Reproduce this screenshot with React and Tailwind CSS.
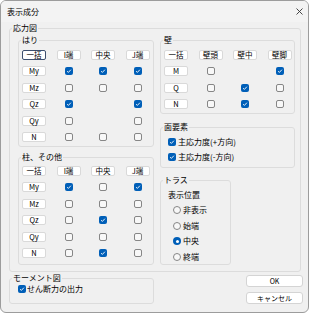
import React from 'react';

// checkbox state per row: 1 = checked, 0 = empty, null = no box
const HARI = [
  ['My', [1, 1, 1]],
  ['Mz', [0, 0, 0]],
  ['Qz', [1, null, 1]],
  ['Qy', [0, null, 0]],
  ['N', [0, 0, 0]],
];
const HASHIRA = [
  ['My', [1, 0, 1]],
  ['Mz', [0, 0, 0]],
  ['Qz', [0, 1, 0]],
  ['Qy', [0, 0, 0]],
  ['N', [0, 1, 0]],
];
const KABE = [
  ['M', [0, null, 1]],
  ['Q', [0, 1, 0]],
  ['N', [0, 1, 0]],
];

const Check = ({ on }) =>
  on ? (
    <span className="w-[8px] h-[8px] rounded-[2px] bg-[#005fb8] flex items-center justify-center shrink-0">
      <svg width="6" height="6" viewBox="0 0 6 6">
        <path d="M1.1 3.2 2.4 4.4 4.9 1.7" fill="none" stroke="#fff" strokeWidth="0.9" />
      </svg>
    </span>
  ) : (
    <span className="w-[8px] h-[8px] rounded-[2px] border border-[#868686] bg-[#f8f8f8] shrink-0" />
  );

const Radio = ({ on }) =>
  on ? (
    <span className="w-[8px] h-[8px] rounded-full bg-[#005fb8] flex items-center justify-center shrink-0">
      <span className="w-[3px] h-[3px] rounded-full bg-white" />
    </span>
  ) : (
    <span className="w-[8px] h-[8px] rounded-full border border-[#868686] bg-[#f8f8f8] shrink-0" />
  );

const BTN_FOCUS =
  'w-[24px] h-[10px] bg-white border border-[#3d4f6e] rounded-[2px] flex items-center justify-center text-[7.5px] leading-none text-black';
const BTN =
  'w-[24px] h-[10px] bg-white border border-[#d9d9d9] rounded-[2px] flex items-center justify-center text-[7.5px] leading-none text-black';

const Btn = ({ children, focus }) => <span className={focus ? BTN_FOCUS : BTN}>{children}</span>;

const Group = ({ label, className = '', children }) => (
  <fieldset className={`border border-[#dcdcdc] rounded-[3px] ${className}`}>
    <legend className="ml-[2px] px-[1px] text-[8px] leading-[10px] text-black">{label}</legend>
    {children}
  </fieldset>
);

const Row = ({ tall, children }) => (
  <div
    className={
      tall
        ? 'grid grid-cols-[24px_24px_24px_24px] gap-x-[10.5px] h-[17px] items-center justify-items-center'
        : 'grid grid-cols-[24px_24px_24px_24px] gap-x-[10.5px] h-[16px] items-center justify-items-center'
    }
  >
    {children}
  </div>
);

const Matrix = ({ heads, rows, focusFirst }) => (
  <div className="pl-[3px]">
    <Row tall>
      {heads.map((h, i) => (
        <Btn key={h} focus={focusFirst && i === 0}>{h}</Btn>
      ))}
    </Row>
    {rows.map(([name, cells], r) => (
      <Row key={name} tall={r % 2 === 1}>
        <Btn>{name}</Btn>
        {cells.map((c, i) => (c === null ? <span key={i} /> : <Check key={i} on={c} />))}
      </Row>
    ))}
  </div>
);

export default function App() {
  return (
    <div className="w-[309px] h-[314px] bg-white font-['Noto_Sans_CJK_JP',sans-serif] text-black">
      <div className="w-[309px] h-[313px] border border-[#9c9c9c] rounded-[6px] bg-[#f0f0f0] overflow-hidden flex flex-col">
        {/* title bar */}
        <div className="h-[21px] flex items-center justify-between pl-[6px] pr-[5px] bg-[#f3f3f3]">
          <span className="text-[8px] leading-none">表示成分</span>
          <svg width="7" height="7" viewBox="0 0 7 7">
            <path d="M0.5 0.5 6.5 6.5M6.5 0.5 0.5 6.5" stroke="#333" strokeWidth="0.9" />
          </svg>
        </div>

        <div className="flex flex-col pl-[8px] pt-[1px]">
          <Group label="応力図" className="w-[292px]">
            <div className="flex gap-[6px] pl-[8px] pt-[2px] pb-[6px]">
              {/* left column */}
              <div className="flex flex-col w-[136px]">
                <Group label="はり">
                  <div className="pt-[1px] pb-[1px]">
                    <Matrix heads={['一括', 'I端', '中央', 'J端']} rows={HARI} focusFirst />
                  </div>
                </Group>
                <Group label="柱、その他" className="mt-[5px]">
                  <div className="pb-[3px]">
                    <Matrix heads={['一括', 'I端', '中央', 'J端']} rows={HASHIRA} />
                  </div>
                </Group>
              </div>

              {/* right column */}
              <div className="flex flex-col w-[135px]">
                <Group label="壁">
                  <div className="pt-[1px] pb-[1px]">
                    <Matrix heads={['一括', '壁頭', '壁中', '壁脚']} rows={KABE} />
                  </div>
                </Group>
                <Group label="面要素" className="mt-[8px]">
                  <div className="pl-[7px] pt-[2px] pb-[3px] text-[8px]">
                    <div className="h-[15px] flex items-center gap-[2px]">
                      <Check on={1} />
                      <span>主応力度(+方向)</span>
                    </div>
                    <div className="h-[15px] flex items-center gap-[2px]">
                      <Check on={1} />
                      <span>主応力度(-方向)</span>
                    </div>
                  </div>
                </Group>
                <Group label="トラス" className="mt-[7px] w-[71px]">
                  <div className="pt-[3px] text-[8px]">
                    <div className="h-[14px] flex items-center pl-[7px]">表示位置</div>
                    {[['非表示', 0, true], ['始端', 0, false], ['中央', 1, true], ['終端', 0, false]].map(([t, on, tall]) => (
                      <div
                        key={t}
                        className={
                          tall
                            ? 'h-[16px] flex items-center gap-[2px] pl-[12px]'
                            : 'h-[15px] flex items-center gap-[2px] pl-[12px]'
                        }
                      >
                        <Radio on={on} />
                        <span>{t}</span>
                      </div>
                    ))}
                  </div>
                </Group>
              </div>
            </div>
          </Group>

          {/* bottom row */}
          <div className="w-[294px] flex justify-between mt-[1px]">
            <Group label="モーメント図" className="w-[145px]">
              <div className="h-[12px] flex items-center gap-[1px] pl-[8px] text-[8px] mb-[3px]">
                <Check on={1} />
                <span>せん断力の出力</span>
              </div>
            </Group>
            <div className="flex flex-col gap-[5px] pt-[2px]">
              <span className="w-[57px] h-[12px] bg-white border border-[#d4d4d4] rounded-[3px] flex items-center justify-center text-[7px] leading-none">
                OK
              </span>
              <span className="w-[57px] h-[12px] bg-white border border-[#d4d4d4] rounded-[3px] flex items-center justify-center text-[7px] leading-none">
                キャンセル
              </span>
            </div>
          </div>
        </div>
      </div>
    </div>
  );
}
